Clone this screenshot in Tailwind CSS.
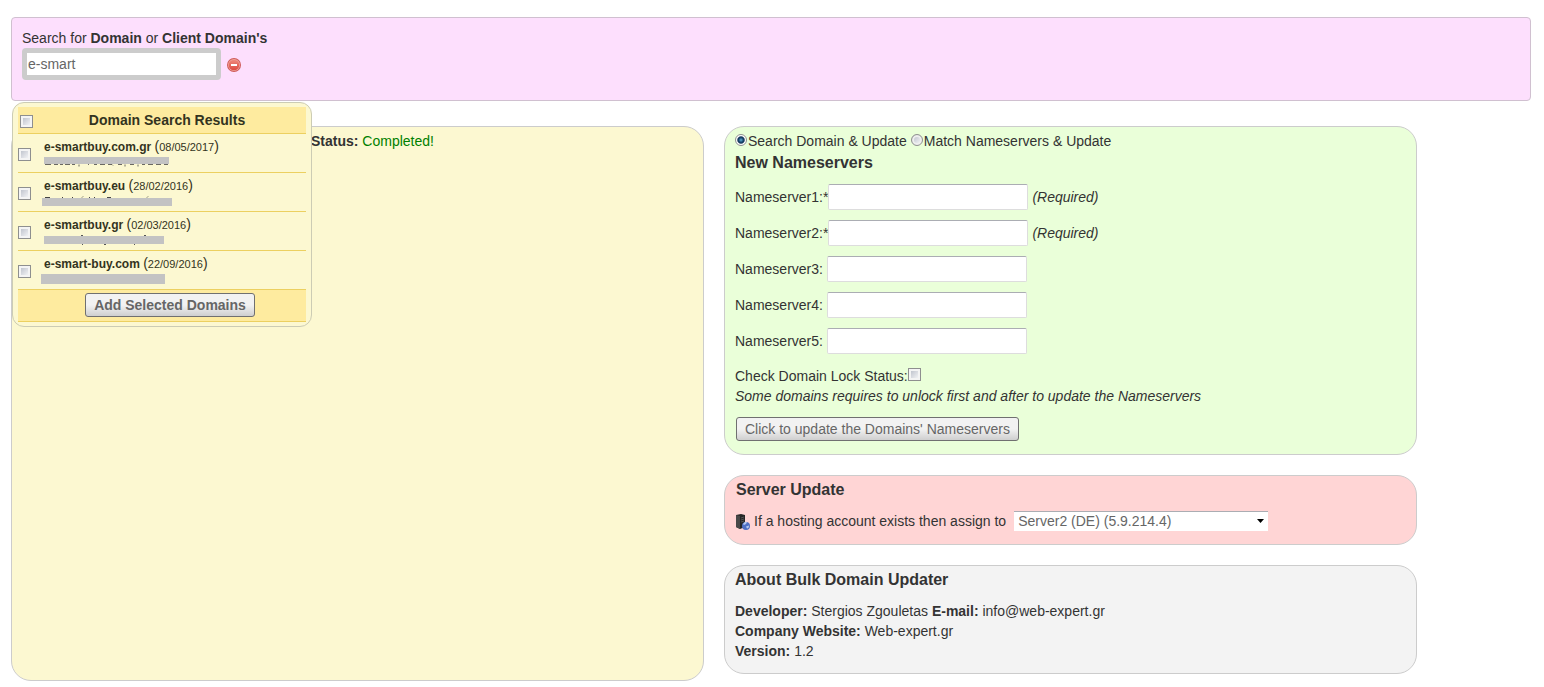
<!DOCTYPE html>
<html lang="en">
<head>
  <meta charset="UTF-8">
  <meta name="viewport" content="width=device-width, initial-scale=1.0">
  <title>Bulk Domain Updater</title>
  <script src="https://cdn.jsdelivr.net/npm/@tailwindcss/browser@4"></script>
</head>
<body class="bg-white px-[11px] pt-[17px] pb-1 font-['Liberation_Sans',Arial,sans-serif] text-sm leading-5 text-[#333]">

  <!-- Search bar -->
  <section class="relative mr-0.5 h-[84px] rounded border border-[#d0c0d0] bg-[#fddffd] px-2.5 pt-2.5">
    <label for="search" class="block">Search for <b>Domain</b> or <b>Client Domain's</b></label>
    <div class="flex items-center gap-1.5">
      <input id="search" type="text" value="e-smart" class="h-8 w-[199px] rounded border-[5px] border-[#ccc] bg-white px-px text-[#666] outline-none">
      <button type="button" aria-label="Clear search" class="pt-0.5">
        <svg class="size-3.5" viewBox="0 0 14 14">
          <defs>
            <linearGradient id="stop" x1="0" y1="0" x2="0" y2="1">
              <stop offset="0" stop-color="#ee8a7c"/>
              <stop offset="1" stop-color="#dc4a40"/>
            </linearGradient>
          </defs>
          <circle cx="7" cy="7" r="7" fill="#cf5a58"/>
          <circle cx="7" cy="7" r="6" fill="#f0a79e"/>
          <circle cx="7" cy="7" r="5.3" fill="url(#stop)"/>
          <rect x="4" y="6" width="6" height="2" fill="#fff"/>
        </svg>
      </button>
    </div>

    <!-- Results dropdown -->
    <div class="absolute left-0 top-[84px] z-10 w-[300px] rounded-xl border border-[#ccccb4] bg-[#fcf8d1] px-[5px] py-1">
      <table class="w-full border-collapse text-xs leading-4 text-[#333320]">
        <thead>
          <tr class="h-[26px] border-b border-[#ecd060] bg-[#feeb9f]">
            <th class="w-[26px] px-0.5 pt-1 text-left"><input type="checkbox" aria-label="Select all" class="block size-[13px] appearance-none border border-[#8e8f8f] bg-linear-to-br from-[#b4b9c4] to-white shadow-[inset_0_0_0_2px_#f4f4f4]"></th>
            <th class="pr-4 text-center text-sm leading-5">Domain Search Results</th>
          </tr>
        </thead>
        <tbody>
          <tr class="h-[39px] border-b border-[#ecd060]">
            <td class="pt-1"><input type="checkbox" aria-label="e-smartbuy.com.gr" class="block size-[13px] appearance-none border border-[#8e8f8f] bg-linear-to-br from-[#b4b9c4] to-white shadow-[inset_0_0_0_2px_#f4f4f4]"></td>
            <td><b>e-smartbuy.com.gr</b> <span class="text-sm leading-4">(<span class="text-[11px]">08/05/2017</span>)</span>
              <svg class="block h-3 w-[130px] overflow-visible" viewBox="0 0 130 12">
                <path d="M1 9.5h6m3 0h4m2 0h3m2 0h5m2 0h3m4 0v2m9-2h1m5 0h3m3 0h5m3 0h4l1 1m5-1h4m3 0v2m5-2h4m4 0v2m4-2h3m3 0h5m3 0h5m3 0h4" fill="none" stroke="#444" stroke-width=".8"/>
                <rect y="2" width="125" height="7" fill="#c3c3c3"/>
              </svg>
            </td>
          </tr>
          <tr class="h-[39px] border-b border-[#ecd060]">
            <td class="pt-1"><input type="checkbox" aria-label="e-smartbuy.eu" class="block size-[13px] appearance-none border border-[#8e8f8f] bg-linear-to-br from-[#b4b9c4] to-white shadow-[inset_0_0_0_2px_#f4f4f4]"></td>
            <td><b>e-smartbuy.eu</b> <span class="text-sm leading-4">(<span class="text-[11px]">28/02/2016</span>)</span>
              <svg class="block h-3 w-[130px] overflow-visible" viewBox="0 0 130 12">
                <path d="M1 3.5h5m12 0h1m9 0h1m9 0l1-1m6 1h1m4 0h1m12 0h4m36 0l1-1" fill="none" stroke="#444"/>
                <rect x="-2" y="4" width="130" height="8" fill="#c3c3c3"/>
              </svg>
            </td>
          </tr>
          <tr class="h-[39px] border-b border-[#ecd060]">
            <td class="pt-1"><input type="checkbox" aria-label="e-smartbuy.gr" class="block size-[13px] appearance-none border border-[#8e8f8f] bg-linear-to-br from-[#b4b9c4] to-white shadow-[inset_0_0_0_2px_#f4f4f4]"></td>
            <td><b>e-smartbuy.gr</b> <span class="text-sm leading-4">(<span class="text-[11px]">02/03/2016</span>)</span>
              <svg class="block h-3 w-[130px] overflow-visible" viewBox="0 0 130 12">
                <path d="M37 2.5h2m61 0h2M38 11.5h1m21 0h2m28 0h1" fill="none" stroke="#555"/>
                <rect y="3" width="120" height="8" fill="#c3c3c3"/>
              </svg>
            </td>
          </tr>
          <tr class="h-[39px] border-b border-[#ecd060]">
            <td class="pt-1"><input type="checkbox" aria-label="e-smart-buy.com" class="block size-[13px] appearance-none border border-[#8e8f8f] bg-linear-to-br from-[#b4b9c4] to-white shadow-[inset_0_0_0_2px_#f4f4f4]"></td>
            <td><b>e-smart-buy.com</b> <span class="text-sm leading-4">(<span class="text-[11px]">22/09/2016</span>)</span>
              <svg class="block h-3 w-[130px] overflow-visible" viewBox="0 0 130 12">
                <rect x="-3" y="2" width="124" height="10" fill="#c3c3c3"/>
              </svg>
            </td>
          </tr>
        </tbody>
        <tfoot>
          <tr class="h-8 border-b border-[#ecd060] bg-[#feeb9f]">
            <td colspan="2" class="pl-4 text-center">
              <button type="button" class="h-6 rounded-[3px] border border-[#707070] bg-linear-to-b from-[#f2f2f2] from-50% to-[#cfcfcf] px-2 text-sm font-bold text-[#666]">Add Selected Domains</button>
            </td>
          </tr>
        </tfoot>
      </table>
    </div>
  </section>

  <main class="mt-[25px] flex items-start gap-5">
    <!-- Selected domains -->
    <section class="min-h-[555px] w-[693px] shrink rounded-[20px] border border-[#ccc] bg-[#fcf8d1] pt-1 pl-[299px]">
      <b>Status:</b> <span class="text-[#008000]">Completed!</span>
    </section>

    <div class="flex w-[693px] shrink flex-col gap-5">
      <!-- Nameservers -->
      <form class="rounded-[20px] border border-[#ccc] bg-[#eaffd9] px-2.5 pt-1 pb-[13px]">
        <div class="flex gap-1">
          <label class="flex"><input type="radio" name="mode" checked class="mt-[3px] mr-px size-3 appearance-none rounded-full border border-[#8e8f8f] bg-white checked:bg-[radial-gradient(circle,#5fb4d8_0,#1d4a75_30%,#123456_45%,#fff_60%)]">Search Domain &amp; Update</label>
          <label class="flex"><input type="radio" name="mode" class="mt-[3px] mr-px size-3 appearance-none rounded-full border border-[#8e8f8f] bg-linear-to-br from-[#b4b9c4] to-white shadow-[inset_0_0_0_2px_#eee]">Match Nameservers &amp; Update</label>
        </div>
        <h2 class="mt-0.5 text-base leading-5 font-bold">New Nameservers</h2>
        <div class="mt-[11px] flex flex-col gap-2.5">
          <div class="flex items-center">
            <label for="ns1">Nameserver1:*</label>
            <input id="ns1" type="text" class="h-[26px] w-[200px] rounded-xs border border-[#ddd] border-t-[#abadb3] bg-white px-1">
            <i class="ml-1">(Required)</i>
          </div>
          <div class="flex items-center">
            <label for="ns2">Nameserver2:*</label>
            <input id="ns2" type="text" class="h-[26px] w-[200px] rounded-xs border border-[#ddd] border-t-[#abadb3] bg-white px-1">
            <i class="ml-1">(Required)</i>
          </div>
          <div class="flex items-center gap-1">
            <label for="ns3">Nameserver3:</label>
            <input id="ns3" type="text" class="h-[26px] w-[200px] rounded-xs border border-[#ddd] border-t-[#abadb3] bg-white px-1">
          </div>
          <div class="flex items-center gap-1">
            <label for="ns4">Nameserver4:</label>
            <input id="ns4" type="text" class="h-[26px] w-[200px] rounded-xs border border-[#ddd] border-t-[#abadb3] bg-white px-1">
          </div>
          <div class="flex items-center gap-1">
            <label for="ns5">Nameserver5:</label>
            <input id="ns5" type="text" class="h-[26px] w-[200px] rounded-xs border border-[#ddd] border-t-[#abadb3] bg-white px-1">
          </div>
        </div>
        <div class="mt-3 flex">
          <label for="lock">Check Domain Lock Status:</label>
          <input id="lock" type="checkbox" class="mt-0.5 size-[13px] appearance-none border border-[#8e8f8f] bg-linear-to-br from-[#b4b9c4] to-white shadow-[inset_0_0_0_2px_#f4f4f4]">
        </div>
        <p class="italic">Some domains requires to unlock first and after to update the Nameservers</p>
        <button type="button" class="mt-[11px] ml-px block h-6 rounded-[3px] border border-[#707070] bg-linear-to-b from-[#f2f2f2] from-50% to-[#cfcfcf] px-2 text-[#666]">Click to update the Domains' Nameservers</button>
      </form>

      <!-- Server -->
      <section class="rounded-[20px] border border-[#ccc] bg-[#ffd5d5] px-[11px] pt-1 pb-[13px]">
        <h2 class="mb-[11px] text-base leading-5 font-bold">Server Update</h2>
        <div class="flex items-center gap-1">
          <svg class="h-5 w-3.5" viewBox="0 -3 14 20">
            <path d="M0 1l5-1 4 1v12l-5 2-4-2z" fill="#262626"/>
            <path d="M0 1l4 1v13l-4-2z" fill="#484848"/>
            <path d="M5 4l3-1M5 6l3-1M5 8l3-1" stroke="#666" stroke-width=".7"/>
            <circle cx="10" cy="12" r="4" fill="#4f6fc4"/>
            <path d="M7 10q2-3 4-2l-1 2-2 1zM10 12.500l3-1q0 3-2 3z" fill="#b4c8f0"/>
          </svg>
          <label for="server">If a hosting account exists then assign to</label>
          <div class="relative ml-1">
            <select id="server" class="block h-5 w-[254px] appearance-none border-t border-[#abadb3] bg-white px-1 pb-px leading-[18px] text-[#666]">
              <option>Server2 (DE) (5.9.214.4)</option>
            </select>
            <svg class="pointer-events-none absolute top-2 right-1 h-1 w-[7px]" viewBox="0 0 7 4"><path d="M0 0h7L3.500 4z" fill="#000"/></svg>
          </div>
        </div>
      </section>

      <!-- About -->
      <section class="rounded-[20px] border border-[#ccc] bg-[#f3f3f3] px-2.5 pt-1 pb-3">
        <h2 class="mb-[11px] text-base leading-5 font-bold">About Bulk Domain Updater</h2>
        <p><b>Developer:</b> Stergios Zgouletas <b>E-mail:</b> info@web-expert.gr</p>
        <p><b>Company Website:</b> Web-expert.gr</p>
        <p><b>Version:</b> 1.2</p>
      </section>
    </div>
  </main>
</body>
</html>
